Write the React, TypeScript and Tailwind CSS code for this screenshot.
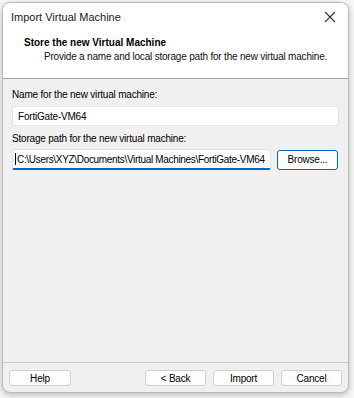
export default function App() {
  return (
    <div className="w-[354px] h-[398px] bg-[#f7f7f7] pt-[2px] pl-[2px] overflow-hidden tracking-[-0.2px]" style={{ fontFamily: '"Liberation Sans", Arial, sans-serif' }}>
      <div className="w-[347px] h-[391px] rounded-[8px] border border-[#b9b9b9] bg-[#f0f0f0] shadow-[0_2px_6px_rgba(0,0,0,0.25)] flex flex-col overflow-hidden">
        {/* title bar */}
        <div className="h-[28px] bg-white flex items-center justify-between pl-[8px] pr-[10px]">
          <span className="text-[11px] text-[#1a1a1a] tracking-normal">Import Virtual Machine</span>
          <svg width="12" height="12" viewBox="0 0 12 12" className="mr-[2px]">
            <path d="M1 1L11 11M11 1L1 11" stroke="#333" strokeWidth="1.1" fill="none" />
          </svg>
        </div>
        {/* header */}
        <div className="h-[48px] bg-white border-b border-[#a0a0a0] pl-[21px] pt-[5px] whitespace-nowrap">
          <div className="text-[10px] font-bold text-black leading-[14px] tracking-normal">Store the new Virtual Machine</div>
          <div className="text-[10px] text-[#111] leading-[14px] pl-[20px]">Provide a name and local storage path for the new virtual machine.</div>
        </div>
        {/* body */}
        <div className="flex-1 px-[9px] pt-[9px] whitespace-nowrap">
          <div className="text-[10px] text-black leading-[13px]">Name for the new virtual machine:</div>
          <div className="mt-[5px] h-[20px] w-[327px] bg-white border border-[#e3e3e3] rounded-[2px] flex items-center pl-[5px] text-[10px] text-black">FortiGate-VM64</div>
          <div className="mt-[6px] text-[10px] text-black leading-[13px]">Storage path for the new virtual machine:</div>
          <div className="mt-[4px] flex items-center gap-[6px]">
            <div className="h-[21px] w-[259px] bg-white border border-[#e3e3e3] border-b-[2px] border-b-[#0067c0] rounded-[2px] flex items-center pl-[2px] text-[10px] text-black overflow-hidden tracking-[-0.32px]">
              <span className="w-px h-[12px] bg-black mr-[1px]" />C:\Users\XYZ\Documents\Virtual Machines\FortiGate-VM64
            </div>
            <div className="h-[20px] w-[61px] bg-[#fdfdfd] border border-[#0067c0] rounded-[3px] flex items-center justify-center text-[10px] text-black">Browse...</div>
          </div>
        </div>
        {/* footer */}
        <div className="h-[30px] border-t border-[#c8c8c8] flex items-center px-[6px]">
          <button className="h-[16px] w-[62px] bg-[#fdfdfd] border border-[#d0d0d0] rounded-[3px] text-[10px] text-black">Help</button>
          <div className="flex-1" />
          <div className="flex gap-[7px]">
            <button className="h-[16px] w-[61px] bg-[#fdfdfd] border border-[#d0d0d0] rounded-[3px] text-[10px] text-black">&lt; Back</button>
            <button className="h-[16px] w-[61px] bg-[#fdfdfd] border border-[#d0d0d0] rounded-[3px] text-[10px] text-black">Import</button>
            <button className="h-[16px] w-[61px] bg-[#fdfdfd] border border-[#d0d0d0] rounded-[3px] text-[10px] text-black">Cancel</button>
          </div>
        </div>
      </div>
    </div>
  );
}
